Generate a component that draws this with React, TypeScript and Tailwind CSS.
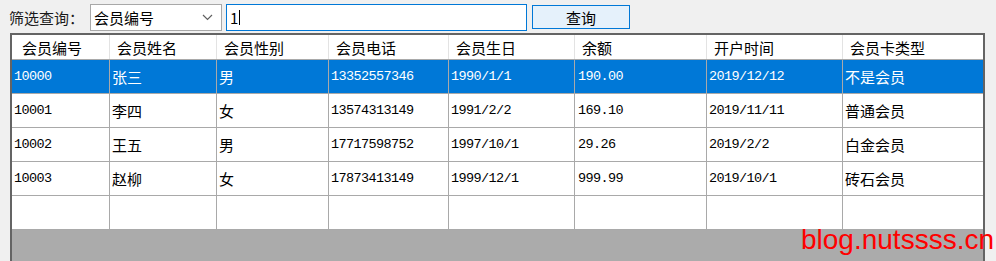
import React from "react";

const cjk = { fontFamily: '"Noto Sans CJK SC", "Microsoft YaHei", sans-serif' };
const mono = { fontFamily: '"Liberation Mono", "DejaVu Sans Mono", monospace' };

const widths = ["w-[98px]", "w-[107px]", "w-[112px]", "w-[120px]", "w-[126px]", "w-[132px]", "w-[136px]", "flex-1"];
const headers = ["会员编号", "会员姓名", "会员性别", "会员电话", "会员生日", "余额", "开户时间", "会员卡类型"];
const rows = [
  ["10000", "张三", "男", "13352557346", "1990/1/1", "190.00", "2019/12/12", "不是会员"],
  ["10001", "李四", "女", "13574313149", "1991/2/2", "169.10", "2019/11/11", "普通会员"],
  ["10002", "王五", "男", "17717598752", "1997/10/1", "29.26", "2019/2/2", "白金会员"],
  ["10003", "赵柳", "女", "17873413149", "1999/12/1", "999.99", "2019/10/1", "砖石会员"],
];
const isMono = [true, false, false, true, true, true, true, false];

export default function App() {
  return (
    <div className="relative w-[996px] h-[261px] overflow-hidden bg-[#f0f0f0] text-black" style={cjk}>
      <div className="flex items-start pt-[4px] pl-[9px]">
        <div className="w-[81px] h-[27px] flex items-center text-[15px] leading-none text-[#1a1a1a]">筛选查询：</div>
        <div className="w-[132px] h-[27px] bg-white border border-[#a8a8a8] flex items-center pl-[3px] pr-[8px]">
          <span className="text-[15px] leading-none flex-1">会员编号</span>
          <svg width="11" height="7" viewBox="0 0 11 7">
            <path d="M1 1 L5.5 5.5 L10 1" fill="none" stroke="#606060" strokeWidth="1.2" />
          </svg>
        </div>
        <div className="ml-[4px] w-[301px] h-[27px] bg-white border border-[#0078d7] flex items-center pl-[3px]">
          <span className="text-[15px] leading-none">1</span>
          <span className="ml-[1px] w-[1px] h-[15px] bg-black" />
        </div>
        <div className="ml-[5px] mt-[1px] w-[98px] h-[24px] bg-[#e5f1fb] border border-[#0078d7] flex items-center justify-center text-[15px] leading-none">
          查询
        </div>
      </div>
      <div className="ml-[10px] mt-[2px] w-[975px] h-[240px] border-2 border-b-0 border-[#646464] bg-[#ababab]">
        <div className="flex h-[25px] bg-white border-b border-[#a9a9a9]">
          {headers.map((h, i) => (
            <div
              key={i}
              className={`${widths[i]} ${i < 7 ? "border-r border-[#e3e3e3]" : ""} ${i === 0 ? "pl-[10px]" : "pl-[7px]"} flex items-center text-[15px] leading-none`}
            >
              {h}
            </div>
          ))}
        </div>
        {rows.map((r, ri) => (
          <div
            key={ri}
            className={`flex h-[34px] border-b border-[#a9a9a9] ${ri === 0 ? "bg-[#0078d7] text-white" : "bg-white text-black"}`}
          >
            {r.map((c, i) => (
              <div
                key={i}
                className={`${widths[i]} ${i < 7 ? "border-r border-[#a9a9a9]" : ""} ${i === 5 ? "pl-[3px]" : "pl-[2px]"} flex items-center leading-none ${isMono[i] ? "text-[13.5px] tracking-[-0.6px]" : "text-[15px]"}`}
                style={isMono[i] ? mono : undefined}
              >
                {c}
              </div>
            ))}
          </div>
        ))}
        <div className="flex h-[34px] border-b border-[#a9a9a9] bg-white">
          {widths.map((w, i) => (
            <div key={i} className={`${w} ${i < 7 ? "border-r border-[#a9a9a9]" : ""}`} />
          ))}
        </div>
      </div>
      <div
        className="absolute left-[801px] top-[226px] text-[28px] leading-[28px] text-[#ff0000] whitespace-nowrap"
        style={{ fontFamily: '"Liberation Sans", Arial, sans-serif' }}
      >
        blog.nutssss.cn
      </div>
    </div>
  );
}
